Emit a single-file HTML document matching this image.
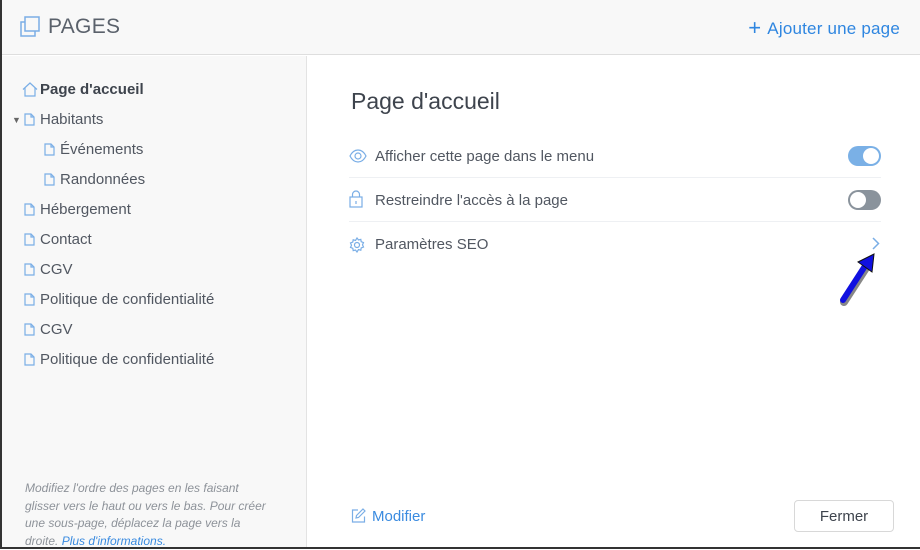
<!DOCTYPE html>
<html><head><meta charset="utf-8"><style>
*{margin:0;padding:0;box-sizing:border-box}
body{width:920px;height:549px;overflow:hidden;background:#fff;font-family:"Liberation Sans",sans-serif;color:#515761;position:relative}
.win{position:absolute;left:0;top:0;width:920px;height:549px;border-left:2px solid #333;border-bottom:2px solid #333;background:#fff}
.top{position:absolute;left:0;top:0;width:918px;height:55px;background:#f8f8f8;border-bottom:1px solid #dedede}
.title{position:absolute;left:46px;top:15px;font-size:21px;color:#5a616b;letter-spacing:0.3px}
.add{position:absolute;right:20px;top:14px;font-size:17px;color:#2f86e0;letter-spacing:0.2px}
.side{position:absolute;left:0;top:56px;width:305px;height:491px;background:#f8f8f8;border-right:1px solid #e3e3e3}
.item{position:absolute;font-size:15px;color:#515761;height:20px;line-height:20px;margin-top:2px}
.item svg{position:absolute;left:-16px;top:3px}
.note{position:absolute;left:23px;top:480px;width:250px;font-size:12px;line-height:17.5px;color:#8d9299;font-style:italic}
.note span{color:#3a8be0}
h1{position:absolute;left:349px;top:88px;font-size:23px;font-weight:normal;color:#3e444d}
.row{position:absolute;left:347px;width:532px;height:44px;border-bottom:1px solid #eef0f3;font-size:15px}
.row .t{position:absolute;left:26px;top:14px}
.row svg.i{position:absolute;left:0;top:15px}
.tg{position:absolute;right:0;top:12px;width:33px;height:20px;border-radius:10px}
.tg::after{content:"";position:absolute;top:2px;width:16px;height:16px;border-radius:50%;background:#fff}
.on{background:#7ab0e6}.on::after{right:2px}
.off{background:#8a939c}.off::after{left:2px}
.mod{position:absolute;left:349px;top:506px;font-size:15px;color:#3a8be0}
.btn{position:absolute;left:792px;top:500px;width:100px;height:32px;border:1px solid #d8d8d8;border-radius:4px;font-size:15px;text-align:center;line-height:32px;color:#3e444d;background:#fff}
</style></head><body><div class="win">
<div class="top">
<svg style="position:absolute;left:17px;top:16px" width="22" height="22" viewBox="0 0 22 22" fill="none" stroke="#7aaee6" stroke-width="1.5"><rect x="6" y="1" width="14" height="14"/><path d="M6 6H2v14h14v-5"/></svg>
<div class="title">PAGES</div>
<div class="add"><span style="font-size:22px;position:relative;top:1px;margin-right:6px">+</span>Ajouter une page</div>
</div>
<div class="side">
<div class="item" style="left:38px;top:22px;font-weight:bold;color:#3e444d"><svg style="left:-18px;top:2px" width="16" height="15" viewBox="0 0 16 15" fill="none" stroke="#7aaee6" stroke-width="1.2"><path d="M1 7.5L8 1l7 6.5M3 6v8h10V6"/></svg>Page d'accueil</div>
<div class="item" style="left:38px;top:52px"><span style="position:absolute;left:-28px;top:0;font-size:9px;color:#666">▼</span><svg width="11" height="13" viewBox="0 0 11 13" fill="none" stroke="#7aaee6" stroke-width="1.2"><path d="M1 1h6l3 3v8H1z M7 1v3h3"/></svg>Habitants</div>
<div class="item" style="left:58px;top:82px"><svg width="11" height="13" viewBox="0 0 11 13" fill="none" stroke="#7aaee6" stroke-width="1.2"><path d="M1 1h6l3 3v8H1z M7 1v3h3"/></svg>Événements</div>
<div class="item" style="left:58px;top:112px"><svg width="11" height="13" viewBox="0 0 11 13" fill="none" stroke="#7aaee6" stroke-width="1.2"><path d="M1 1h6l3 3v8H1z M7 1v3h3"/></svg>Randonnées</div>
<div class="item" style="left:38px;top:142px"><svg width="11" height="13" viewBox="0 0 11 13" fill="none" stroke="#7aaee6" stroke-width="1.2"><path d="M1 1h6l3 3v8H1z M7 1v3h3"/></svg>Hébergement</div>
<div class="item" style="left:38px;top:172px"><svg width="11" height="13" viewBox="0 0 11 13" fill="none" stroke="#7aaee6" stroke-width="1.2"><path d="M1 1h6l3 3v8H1z M7 1v3h3"/></svg>Contact</div>
<div class="item" style="left:38px;top:202px"><svg width="11" height="13" viewBox="0 0 11 13" fill="none" stroke="#7aaee6" stroke-width="1.2"><path d="M1 1h6l3 3v8H1z M7 1v3h3"/></svg>CGV</div>
<div class="item" style="left:38px;top:232px"><svg width="11" height="13" viewBox="0 0 11 13" fill="none" stroke="#7aaee6" stroke-width="1.2"><path d="M1 1h6l3 3v8H1z M7 1v3h3"/></svg>Politique de confidentialité</div>
<div class="item" style="left:38px;top:262px"><svg width="11" height="13" viewBox="0 0 11 13" fill="none" stroke="#7aaee6" stroke-width="1.2"><path d="M1 1h6l3 3v8H1z M7 1v3h3"/></svg>CGV</div>
<div class="item" style="left:38px;top:292px"><svg width="11" height="13" viewBox="0 0 11 13" fill="none" stroke="#7aaee6" stroke-width="1.2"><path d="M1 1h6l3 3v8H1z M7 1v3h3"/></svg>Politique de confidentialité</div>
</div>
<div class="note">Modifiez l'ordre des pages en les faisant glisser vers le haut ou vers le bas. Pour créer une sous-page, déplacez la page vers la droite. <span>Plus d'informations.</span></div>
<h1>Page d'accueil</h1>
<div class="row" style="top:134px"><svg class="i" width="18" height="14" viewBox="0 0 18 14" fill="none" stroke="#7aaee6" stroke-width="1.2"><path d="M1 7c2-4 5-6 8-6s6 2 8 6c-2 4-5 6-8 6S3 11 1 7z"/><circle cx="9" cy="7" r="3"/></svg><span class="t">Afficher cette page dans le menu</span><div class="tg on"></div></div>
<div class="row" style="top:178px"><svg class="i" style="top:12px" width="14" height="18" viewBox="0 0 14 18" fill="none" stroke="#7aaee6" stroke-width="1.2"><rect x="1" y="7" width="12" height="10"/><path d="M3.5 7V4.5a3.5 3.5 0 0 1 7 0V7M7 11v3"/></svg><span class="t">Restreindre l'accès à la page</span><div class="tg off"></div></div>
<div class="row" style="top:222px;border:none"><svg class="i" width="16" height="16" viewBox="0 0 16 16" fill="none" stroke="#7aaee6" stroke-width="1.2"><circle cx="8" cy="8" r="2.5"/><path d="M8 1l1.5 2 2.3-.6.4 2.3 2.3.9-1 2.2 1 2.2-2.3.9-.4 2.3-2.3-.6L8 15l-1.5-2-2.3.6-.4-2.3-2.3-.9 1-2.2-1-2.2 2.3-.9.4-2.3 2.3.6z"/></svg><span class="t">Paramètres SEO</span><svg style="position:absolute;right:1px;top:15px" width="8" height="13" viewBox="0 0 8 13" fill="none" stroke="#7aaee6" stroke-width="1.5"><path d="M1 1l5.5 5.5L1 12"/></svg></div>
<svg style="position:absolute;left:836px;top:250px" width="42" height="58" viewBox="0 0 42 58"><path d="M6 52L28 18" stroke="#111" stroke-width="8" stroke-linecap="round" opacity=".5"/><path d="M5 50L27 16" stroke="#1010e0" stroke-width="6" stroke-linecap="round"/><path d="M20 12L36 4 34 22z" fill="#1010e0" stroke="#111" stroke-width="1"/></svg>
<div class="mod"><svg style="position:relative;top:2px;margin-right:6px" width="15" height="15" viewBox="0 0 15 15" fill="none" stroke="#7aaee6" stroke-width="1.2"><path d="M7 2H1.5v12h12V8.5M12 1l2 2-6.5 6.5-2.5.5.5-2.5z"/></svg>Modifier</div>
<div class="btn">Fermer</div>
</div></body></html>
